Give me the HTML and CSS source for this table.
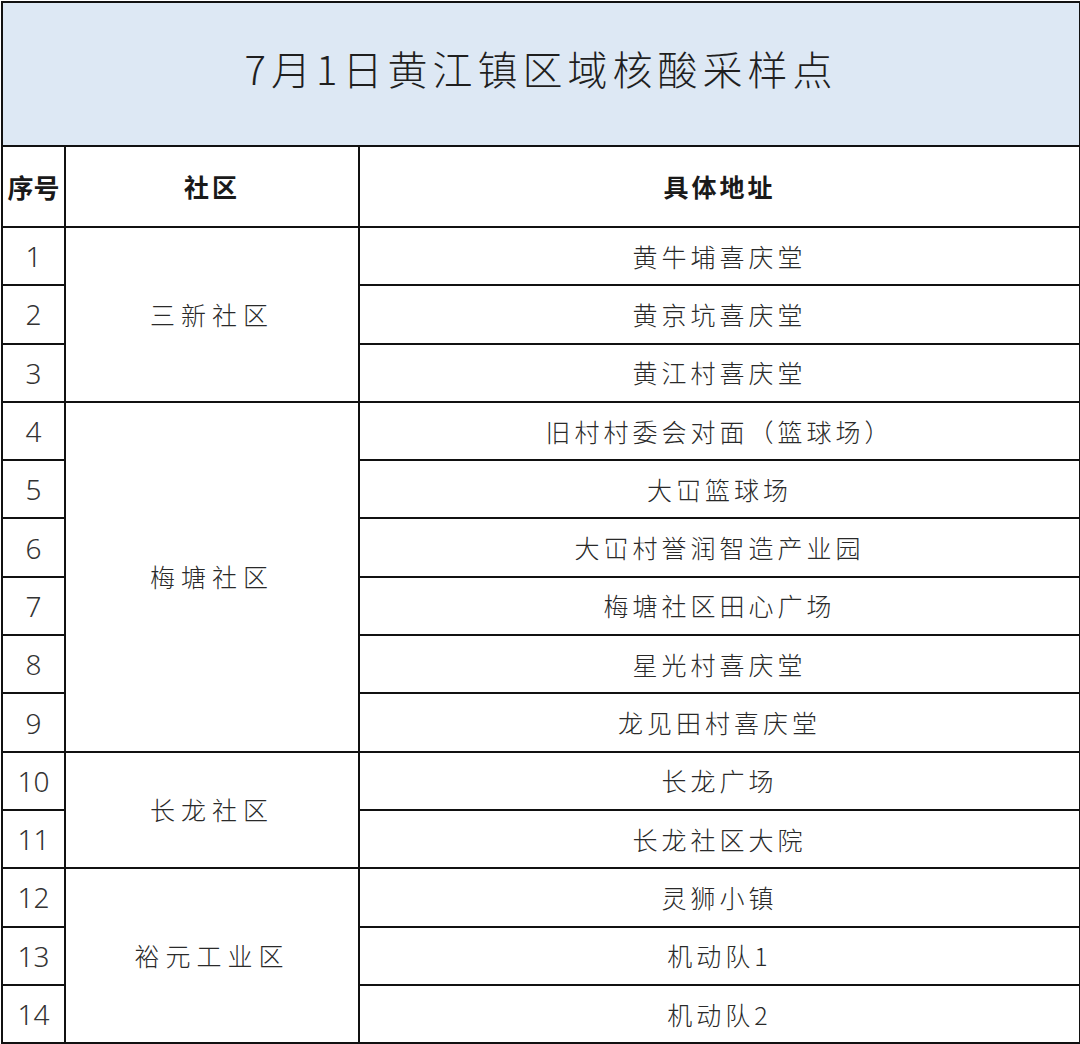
FILE: index.html
```html
<!DOCTYPE html>
<html lang="zh-CN">
<head>
<meta charset="utf-8">
<title>7月1日黄江镇区域核酸采样点</title>
<link rel="stylesheet" href="styles.css">
</head>
<body>
<table class="sheet">
  <colgroup>
    <col class="c-no">
    <col class="c-area">
    <col class="c-addr">
  </colgroup>
  <tr class="title-row"><td colspan="3" class="title">7月1日黄江镇区域核酸采样点</td></tr>
  <tr class="head-row">
    <th class="head-no">序号</th>
    <th>社区</th>
    <th>具体地址</th>
  </tr>
  <tr><td class="no">1</td><td rowspan="3" class="area">三新社区</td><td>黄牛埔喜庆堂</td></tr>
  <tr><td class="no">2</td><td>黄京坑喜庆堂</td></tr>
  <tr><td class="no">3</td><td>黄江村喜庆堂</td></tr>
  <tr><td class="no">4</td><td rowspan="6" class="area">梅塘社区</td><td>旧村村委会对面（篮球场）</td></tr>
  <tr><td class="no">5</td><td>大冚篮球场</td></tr>
  <tr><td class="no">6</td><td>大冚村誉润智造产业园</td></tr>
  <tr><td class="no">7</td><td>梅塘社区田心广场</td></tr>
  <tr><td class="no">8</td><td>星光村喜庆堂</td></tr>
  <tr><td class="no">9</td><td>龙见田村喜庆堂</td></tr>
  <tr><td class="no">10</td><td rowspan="2" class="area">长龙社区</td><td>长龙广场</td></tr>
  <tr><td class="no">11</td><td>长龙社区大院</td></tr>
  <tr><td class="no">12</td><td rowspan="3" class="area">裕元工业区</td><td>灵狮小镇</td></tr>
  <tr><td class="no">13</td><td>机动队1</td></tr>
  <tr><td class="no">14</td><td>机动队2</td></tr>
</table>
</body>
</html>
```

FILE: styles.css
```css
html, body {
  margin: 0;
  padding: 0;
  background: #ffffff;
}

.sheet {
  border-collapse: collapse;
  table-layout: fixed;
  width: 1078px;
  margin: 1px 0 0 1px;
  font-family: "Noto Sans CJK SC", "Noto Sans", sans-serif;
  color: #2a2a2a;
}

.c-no { width: 63px; }
.c-area { width: 294px; }
.c-addr { width: 721px; }

.sheet td,
.sheet th {
  border: 2px solid #111111;
  text-align: center;
  vertical-align: middle;
  padding: 0;
  font-size: 25px;
  font-weight: 300;
  letter-spacing: 4px;
  line-height: 1;
  white-space: nowrap;
}

.title-row { height: 144px; }
.sheet td.title {
  background: #dde8f4;
  font-size: 40px;
  letter-spacing: 5px;
  color: #1f1f1f;
  padding-bottom: 12px;
}

.head-row { height: 81px; }
.sheet th {
  font-weight: 700;
  font-size: 25px;
  color: #1a1a1a;
  letter-spacing: 3px;
}
.sheet th.head-no {
  letter-spacing: 0;
  font-size: 26px;
}

.sheet tr:not(.title-row):not(.head-row) { height: 58.3px; }

.sheet td.no {
  font-family: "Noto Sans", "Noto Sans CJK SC", sans-serif;
  font-weight: 300;
  font-size: 28px;
  letter-spacing: 0;
  color: #333333;
}

.sheet td.area {
  letter-spacing: 6px;
}
```
